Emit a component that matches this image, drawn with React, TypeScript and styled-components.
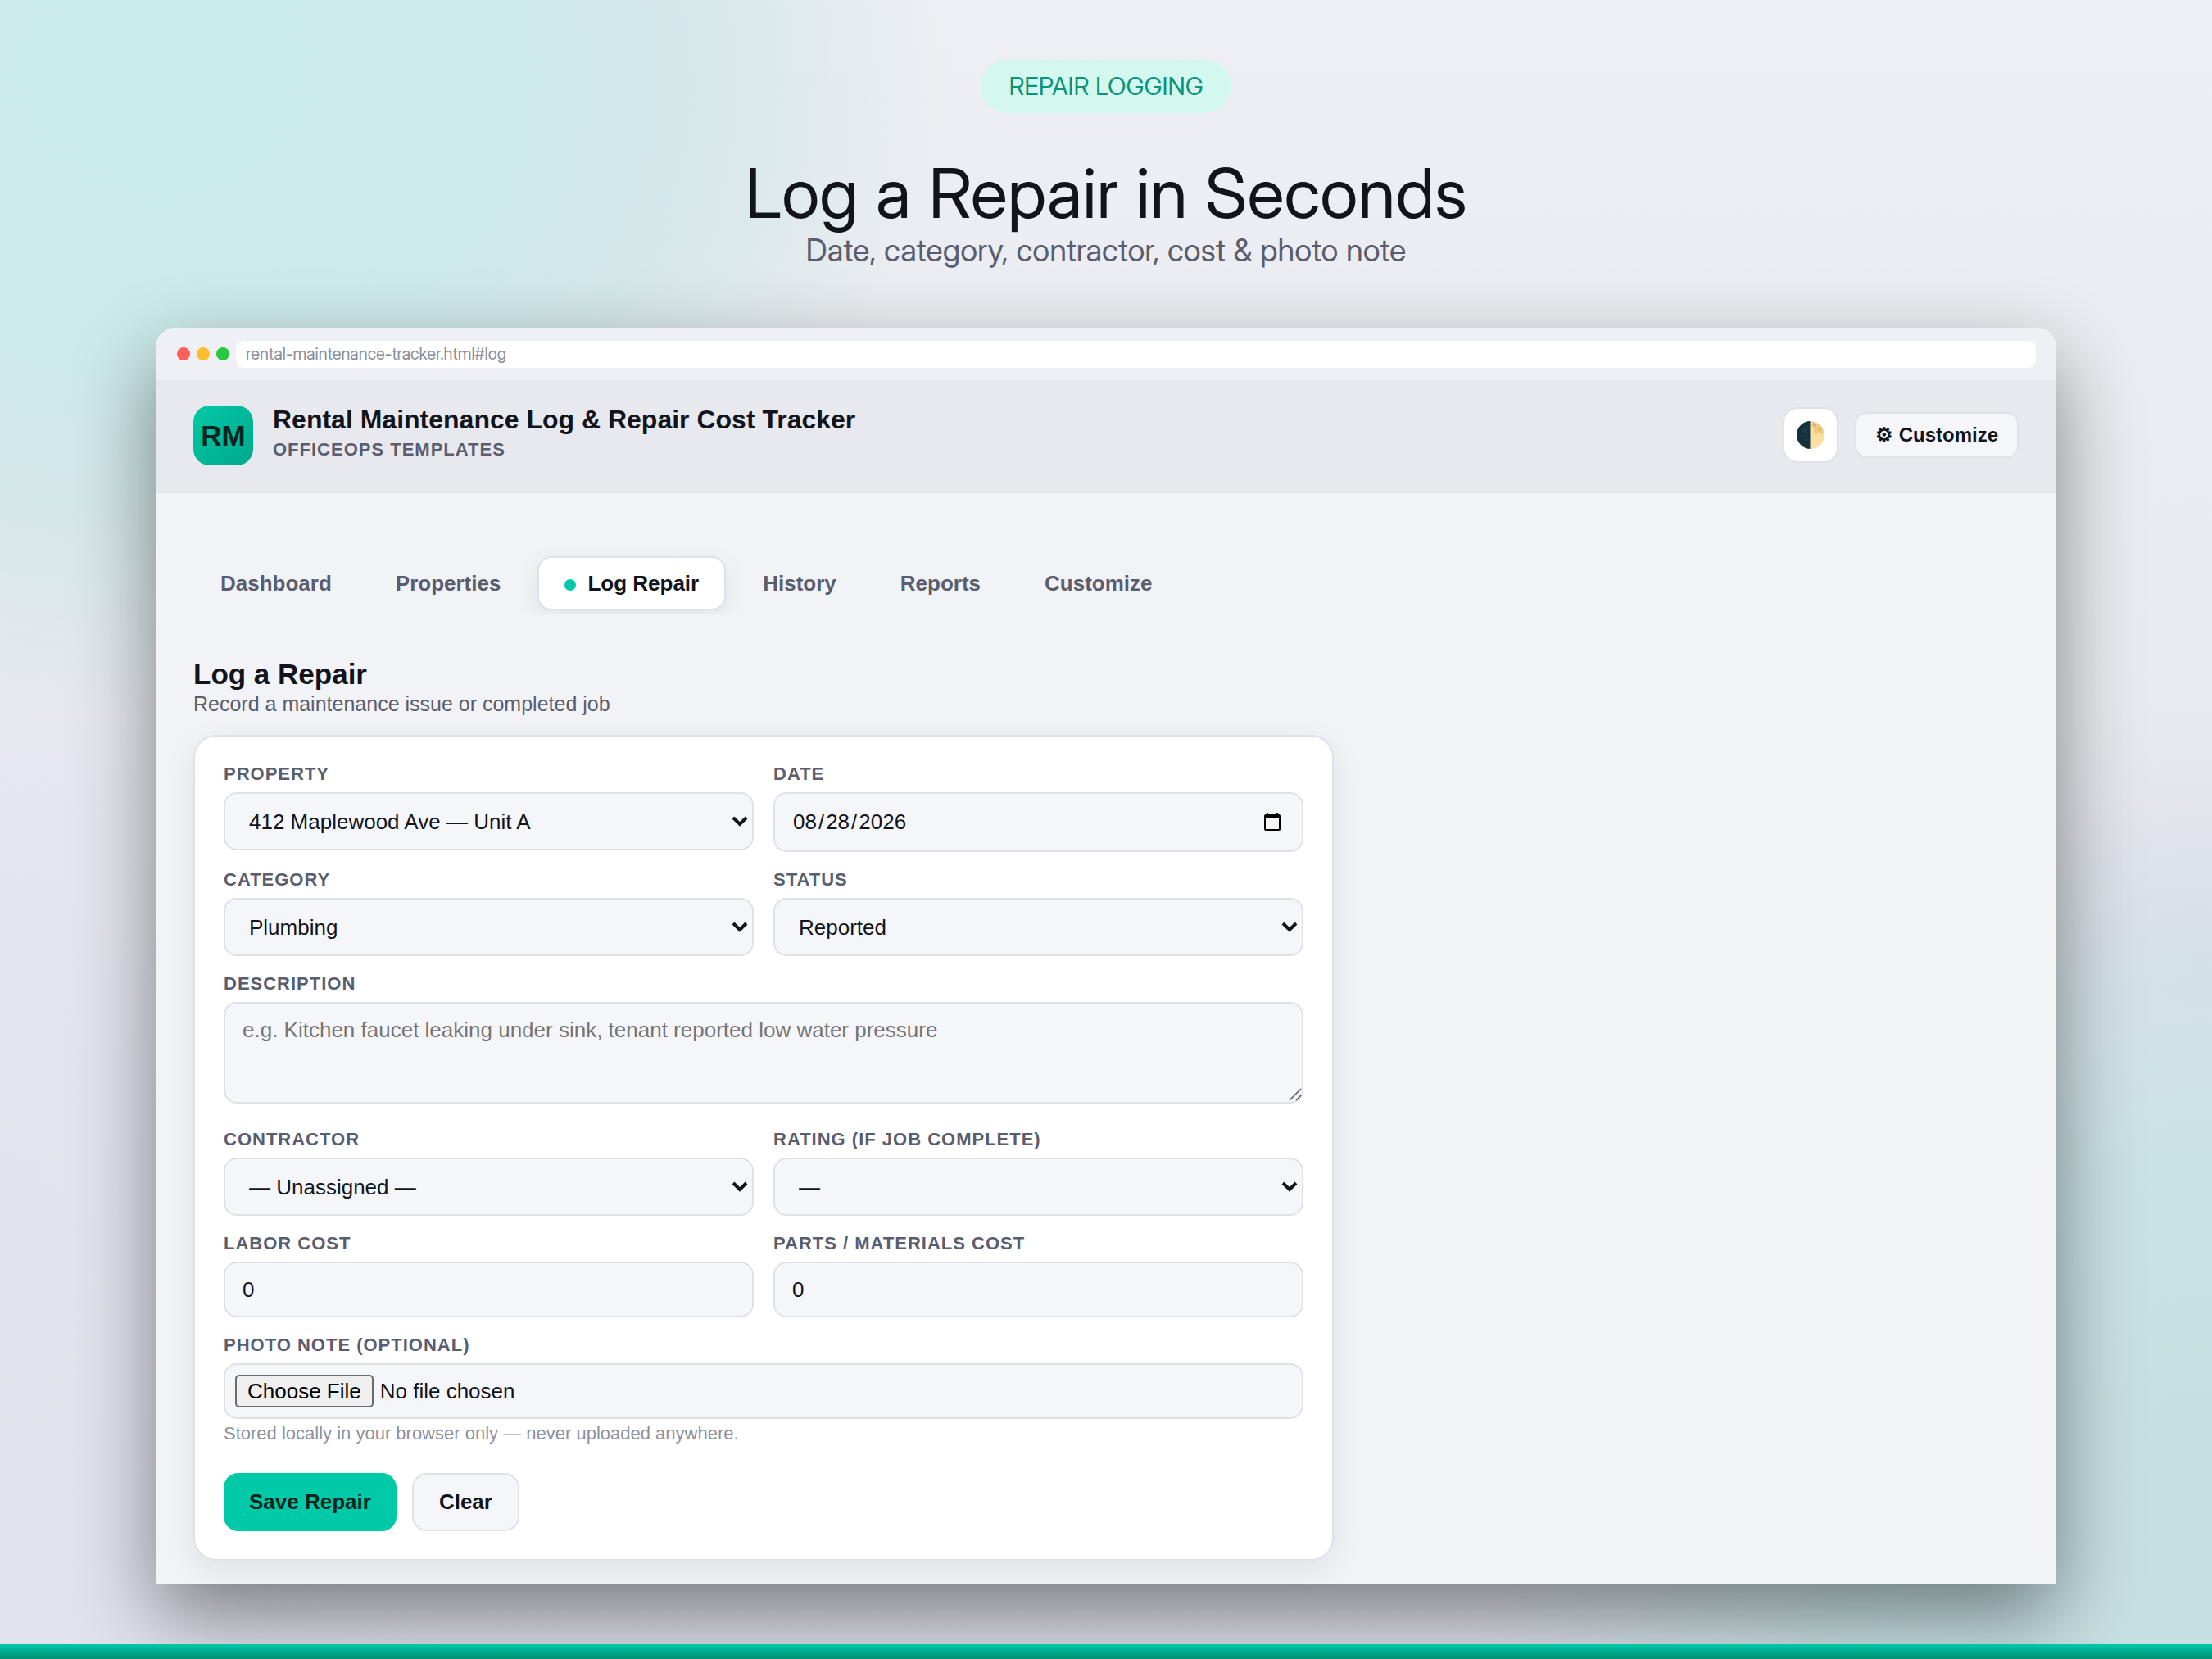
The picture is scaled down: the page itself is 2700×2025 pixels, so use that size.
import React from "react";
import styled, { createGlobalStyle, css } from "styled-components";

const sans = '"Liberation Sans", Arial, sans-serif';
const inter = '"Inter Display", Inter, "Liberation Sans", sans-serif';

const colors = {
  ink: "#12141c",
  muted: "#5a5d6e",
  faint: "#8f919d",
  line: "#e0e1e6",
  field: "#f5f6fa",
  accent: "#00c9a7",
};

const GlobalStyle = createGlobalStyle`
  *, *::before, *::after { box-sizing: border-box; }
  body { margin: 0; background: #e9ebf0; }
  button, input, select, textarea { font: inherit; color: inherit; }
`;

const Page = styled.div`
  min-height: 100vh;
  display: flex;
  flex-direction: column;
  font-family: ${sans};
  color: ${colors.ink};
  background:
    radial-gradient(ellipse 960px 800px at 200px 90px, #cbebea 0%, #cceae9 45%, rgba(208, 230, 230, 0.8) 68%, rgba(228, 231, 234, 0) 100%),
    radial-gradient(ellipse 900px 900px at 100% 92%, #c5dfe2 0%, #c9e2e3 50%, rgba(215, 228, 230, 0) 100%),
    radial-gradient(ellipse 500px 320px at 100% 58%, rgba(212, 214, 227, 0.5) 0%, rgba(212, 214, 227, 0) 100%),
    radial-gradient(ellipse 700px 900px at 0% 75%, #e1e4ee 0%, rgba(225, 228, 238, 0) 100%),
    linear-gradient(180deg, #eeeff4 0%, #e7e8ed 60%, #dfe2ea 100%);
`;

const Hero = styled.header`
  display: flex;
  flex-direction: column;
  align-items: center;
  padding-top: 73px;
  font-family: ${inter};
  text-align: center;
`;

const Pill = styled.span`
  padding: 0 34px;
  border-radius: 33px;
  background: #d4f7ef;
  color: #0a9479;
  font-size: 30px;
  line-height: 65px;
`;

const HeroTitle = styled.h1`
  margin: 48px 0 0;
  font-size: 84px;
  font-weight: 400;
  line-height: 99px;
`;

const HeroText = styled.p`
  margin: 0;
  color: ${colors.muted};
  font-size: 38px;
  line-height: 40px;
`;

const Browser = styled.section`
  flex: 1;
  display: flex;
  flex-direction: column;
  margin: 75px 190px 74px;
  border-radius: 24px 24px 0 0;
  background: #f1f3f7;
  box-shadow: 0 40px 100px rgba(0, 0, 0, 0.45);
`;

const Chrome = styled.div`
  display: flex;
  align-items: center;
  gap: 8px;
  height: 64px;
  padding: 0 25px 0 26px;
  border-radius: 24px 24px 0 0;
  background: #eff0f5;
`;

const Light = styled.span<{ $color: string }>`
  width: 16px;
  height: 16px;
  border-radius: 50%;
  background: ${(p) => p.$color};
`;

const Address = styled.div`
  flex: 1;
  padding: 0 12px;
  border-radius: 10px;
  background: #fff;
  color: #8b8d98;
  font-family: ${inter};
  font-size: 20px;
  line-height: 33px;
`;

const AppHeader = styled.div`
  display: flex;
  align-items: center;
  gap: 20px;
  padding: 30px 46px 32px;
  border-bottom: 2px solid ${colors.line};
  background: #e8e9ee;
`;

const Logo = styled.div`
  width: 73px;
  border-radius: 20px;
  background: linear-gradient(135deg, ${colors.accent}, #00a88b);
  color: #06231d;
  font-size: 35px;
  font-weight: 700;
  line-height: 73px;
  text-align: center;
`;

const Brand = styled.div`
  flex: 1;
  padding-left: 4px;
  font-weight: 700;
`;

const BrandName = styled.div`
  font-size: 32px;
  line-height: 36px;
`;

const BrandSub = styled.div`
  color: ${colors.muted};
  font-size: 22px;
  line-height: 38px;
  letter-spacing: 1px;
`;

const buttonBase = css`
  border: 2px solid ${colors.line};
  background: ${colors.field};
  font-family: ${sans};
  font-weight: 700;
`;

const ThemeButton = styled.button`
  ${buttonBase}
  display: grid;
  place-items: center;
  width: 68px;
  height: 68px;
  padding: 0;
  border-radius: 18px;
  background: #fff;
`;

const HeaderButton = styled.button`
  ${buttonBase}
  height: 56px;
  padding: 0 23px;
  border-radius: 14px;
  font-size: 24px;
`;

const Tabs = styled.nav`
  display: flex;
  gap: 12px;
  margin: 67px 46px 0;
  padding: 10px 0 5px;
  overflow: hidden;
`;

const Tab = styled.a<{ $active?: boolean }>`
  display: flex;
  align-items: center;
  gap: 14px;
  height: 66px;
  padding: 0 31px;
  border: 2px solid ${(p) => (p.$active ? colors.line : "transparent")};
  border-radius: 17px;
  background: ${(p) => (p.$active ? "#fff" : "transparent")};
  box-shadow: ${(p) => (p.$active ? "0 8px 30px rgba(20, 22, 40, 0.08)" : "none")};
  color: ${(p) => (p.$active ? colors.ink : colors.muted)};
  font-size: 26px;
  font-weight: 700;
  text-decoration: none;
`;

const Dot = styled.span`
  width: 14px;
  height: 14px;
  margin-top: 4px;
  border-radius: 50%;
  background: ${colors.accent};
`;

const Main = styled.main`
  padding: 53px 46px 26px;
`;

const SectionTitle = styled.h2`
  margin: 0;
  font-size: 35px;
  line-height: 40px;
`;

const SectionText = styled.p`
  margin: 0 0 22px;
  color: ${colors.muted};
  font-size: 25px;
  line-height: 32px;
`;

const Card = styled.form`
  display: grid;
  grid-template-columns: 1fr 1fr;
  column-gap: 24px;
  row-gap: 21px;
  align-items: start;
  max-width: 1392px;
  padding: 33px 35px;
  border: 2px solid ${colors.line};
  border-radius: 28px;
  background: #fff;
  box-shadow: 0 12px 40px rgba(20, 22, 40, 0.08);
`;

const FieldBox = styled.div<{ $wide?: boolean; $after?: number }>`
  display: flex;
  flex-direction: column;
  grid-column: ${(p) => (p.$wide ? "1 / -1" : "auto")};
  padding-bottom: ${(p) => p.$after ?? 0}px;
`;

const Label = styled.label`
  margin-bottom: 10px;
  color: ${colors.muted};
  font-size: 22px;
  font-weight: 700;
  line-height: 25px;
  letter-spacing: 1px;
  text-transform: uppercase;
`;

const control = css`
  display: block;
  width: 100%;
  margin: 0;
  border: 2px solid ${colors.line};
  border-radius: 16px;
  background: ${colors.field};
  color: ${colors.ink};
  font-size: 26px;
  outline: none;
`;

const ControlWrap = styled.div`
  position: relative;
`;

const Select = styled.select`
  ${control}
  appearance: none;
  height: 71px;
  padding: 0 48px 0 29px;
`;

const Chevron = styled.svg`
  position: absolute;
  right: 7px;
  top: 28px;
  pointer-events: none;
`;

const Input = styled.input`
  ${control}
  height: 68px;
  padding: 0 21px;
`;

const DateInput = styled(Input)`
  height: 73px;

  &::-webkit-datetime-edit-text {
    padding: 0 1px;
  }
`;

const FileInput = styled(Input)`
  padding: 12px;

  &::file-selector-button {
    height: 40px;
    margin: 0 8px 0 0;
    padding: 0 13px;
    border: 2px solid #6b6b6b;
    border-radius: 5px;
    background: #efefef;
    color: #000;
    font: inherit;
  }
`;

const TextArea = styled.textarea`
  ${control}
  height: 124px;
  padding: 17px 21px;
  line-height: 30px;
  resize: none;

  &::placeholder {
    color: #757575;
  }
`;

const Grip = styled.svg`
  position: absolute;
  right: 2px;
  bottom: 3px;
  pointer-events: none;
`;

const Hint = styled.p`
  margin: 5px 0 0;
  color: ${colors.faint};
  font-size: 22px;
  line-height: 25px;
`;

const Actions = styled.div`
  display: flex;
  gap: 19px;
  grid-column: 1 / -1;
  padding: 15px 0 1px;
`;

const Action = styled.button<{ $primary?: boolean }>`
  ${buttonBase}
  height: 71px;
  padding: 0 31px;
  border-radius: 18px;
  font-size: 26px;
  ${(p) =>
    p.$primary &&
    css`
      border: 0;
      background: ${colors.accent};
      color: #06231d;
    `}
`;

const Footer = styled.div`
  height: 18px;
  background: linear-gradient(180deg, ${colors.accent}, #008f76);
`;

function Moon() {
  return (
    <svg width="36" height="36" viewBox="0 0 36 36" aria-hidden="true">
      <circle cx="18" cy="18" r="17" fill="#fbdf9f" />
      <path d="M20 2c7 1 11 4 13 9 1 4 0 6-1 6-2 1-2-3-4-3-1 0-1 3-3 3s-1-3-3-4c-1-1 1-3 0-4s-3-1-3-3z" fill="#efc884" />
      <circle cx="23" cy="6" r="2" fill="#dcae68" />
      <circle cx="29" cy="11" r="2" fill="#e2b672" />
      <circle cx="24" cy="14" r="1" fill="#dcae68" />
      <path d="M18 1a17 17 0 0 0 0 34z" fill="#16303b" />
      <circle cx="11" cy="12" r="3" fill="#1d3b47" />
      <circle cx="8" cy="20" r="2" fill="#1d3b47" />
      <circle cx="13" cy="23" r="2" fill="#1d3b47" />
      <path d="M18 1v34" stroke="#f6edc4" strokeWidth="1" />
    </svg>
  );
}

type SelectFieldProps = { id: string; label: string; options: string[] };

function SelectField({ id, label, options }: SelectFieldProps) {
  return (
    <FieldBox>
      <Label htmlFor={id}>{label}</Label>
      <ControlWrap>
        <Select id={id}>
          {options.map((o) => (
            <option key={o}>{o}</option>
          ))}
        </Select>
        <Chevron width="20" height="14" viewBox="0 0 20 14" aria-hidden="true">
          <path d="M2 3l8 8 8-8" fill="none" stroke={colors.ink} strokeWidth="4" />
        </Chevron>
      </ControlWrap>
    </FieldBox>
  );
}

const tabs = ["Dashboard", "Properties", "Log Repair", "History", "Reports", "Customize"];

export default function App() {
  return (
    <Page>
      <GlobalStyle />
      <Hero>
        <Pill>REPAIR LOGGING</Pill>
        <HeroTitle>Log a Repair in Seconds</HeroTitle>
        <HeroText>Date, category, contractor, cost &amp; photo note</HeroText>
      </Hero>
      <Browser>
        <Chrome>
          <Light $color="#ff5f57" />
          <Light $color="#febc2e" />
          <Light $color="#28c840" />
          <Address>rental-maintenance-tracker.html#log</Address>
        </Chrome>
        <AppHeader>
          <Logo>RM</Logo>
          <Brand>
            <BrandName>Rental Maintenance Log &amp; Repair Cost Tracker</BrandName>
            <BrandSub>OFFICEOPS TEMPLATES</BrandSub>
          </Brand>
          <ThemeButton type="button" aria-label="Toggle theme">
            <Moon />
          </ThemeButton>
          <HeaderButton type="button">⚙ Customize</HeaderButton>
        </AppHeader>
        <Tabs>
          {tabs.map((t) => {
            const active = t === "Log Repair";
            return (
              <Tab key={t} href="#log" $active={active}>
                {active && <Dot />}
                {t}
              </Tab>
            );
          })}
        </Tabs>
        <Main>
          <SectionTitle>Log a Repair</SectionTitle>
          <SectionText>Record a maintenance issue or completed job</SectionText>
          <Card onSubmit={(e) => e.preventDefault()}>
            <SelectField id="property" label="Property" options={["412 Maplewood Ave — Unit A"]} />
            <FieldBox>
              <Label htmlFor="date">Date</Label>
              <DateInput id="date" type="date" defaultValue="2026-08-28" />
            </FieldBox>
            <SelectField id="category" label="Category" options={["Plumbing"]} />
            <SelectField id="status" label="Status" options={["Reported"]} />
            <FieldBox $wide $after={10}>
              <Label htmlFor="description">Description</Label>
              <ControlWrap>
                <TextArea
                  id="description"
                  placeholder="e.g. Kitchen faucet leaking under sink, tenant reported low water pressure"
                />
                <Grip width="16" height="16" viewBox="0 0 16 16" aria-hidden="true">
                  <path d="M1 15L15 1M9 15l6-6" stroke="#555" strokeWidth="1.5" />
                </Grip>
              </ControlWrap>
            </FieldBox>
            <SelectField id="contractor" label="Contractor" options={["— Unassigned —"]} />
            <SelectField id="rating" label="Rating (if job complete)" options={["—"]} />
            <FieldBox>
              <Label htmlFor="labor">Labor cost</Label>
              <Input id="labor" type="number" defaultValue="0" />
            </FieldBox>
            <FieldBox>
              <Label htmlFor="parts">Parts / materials cost</Label>
              <Input id="parts" type="number" defaultValue="0" />
            </FieldBox>
            <FieldBox $wide>
              <Label htmlFor="photo">Photo note (optional)</Label>
              <FileInput id="photo" type="file" />
              <Hint>Stored locally in your browser only — never uploaded anywhere.</Hint>
            </FieldBox>
            <Actions>
              <Action type="submit" $primary>
                Save Repair
              </Action>
              <Action type="reset">Clear</Action>
            </Actions>
          </Card>
        </Main>
      </Browser>
      <Footer />
    </Page>
  );
}
